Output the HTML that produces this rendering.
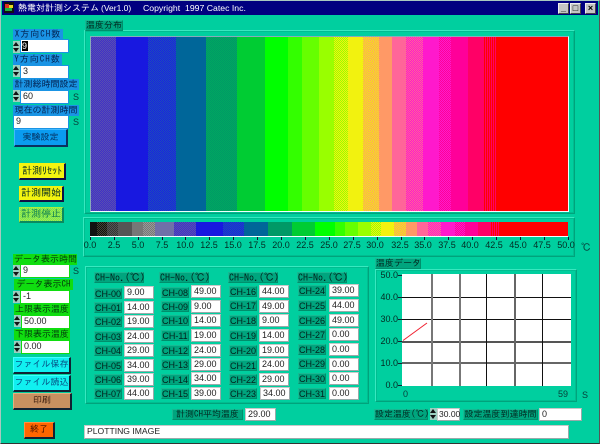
<!DOCTYPE html>
<html><head><meta charset="utf-8"><style>
html,body{margin:0;padding:0;background:#00cf9f;width:600px;height:444px;overflow:hidden}
div,span{position:absolute;box-sizing:border-box;white-space:nowrap}
#w{left:0;top:0;width:600px;height:444px;background:#00cf9f;font:9px/10px "IPAGothic","Liberation Sans","Noto Sans CJK JP",sans-serif;color:#022a22;border:1px solid #a8c8c0;border-right-color:#555;border-bottom-color:#333;overflow:hidden}
#r{left:-1px;top:-1px;width:600px;height:444px}
.l{height:11px;line-height:10px;text-align:center;background:#00a57e;border:1px solid #18b892;border-right-color:#008f6c;border-bottom-color:#008f6c;color:#022a22}
.b{background:#1a94e4;border-color:#1a94e4;color:#03204e}
.g{background:#10dd10;border-color:#10dd10;color:#033a0c}
.i{background:#fff;color:#222;padding-left:2px;line-height:11px;height:13px;border:1px solid #c8c8c8;border-right-color:#9aa;border-bottom-color:#9aa;font-family:"Liberation Sans",sans-serif;font-size:9px}
.ib{border:1px solid #1a94e4;height:14px}
.ig{border:1px solid #10dd10;height:14px}
.s{width:7px;height:12px;background:#9ccfc0}
.s:before{content:"";position:absolute;left:0;top:1px;border:3px solid transparent;border-top:0;border-bottom:4px solid #111;width:0;height:0}
.s:after{content:"";position:absolute;left:0;top:7px;border:3px solid transparent;border-bottom:0;border-top:4px solid #111;width:0;height:0}
.u{font-family:"Liberation Sans",sans-serif;font-size:9px;color:#06403a}
.btn{text-align:center;border:1px solid #ddd;border-right-color:#222;border-bottom-color:#222;border-right-width:2px;border-bottom-width:2px;font-size:9px}
.f{border:1px solid #38e8c0;border-right-color:#00a37c;border-bottom-color:#00a37c;outline:1px solid #00bd90;outline-offset:-2px}
.c{top:0;height:100%}
.n{font-family:"Liberation Sans",sans-serif;font-size:9px;line-height:10px;top:240px;width:30px;text-align:center;color:#032a22}
.t{top:237px;width:1px;height:3px;background:#113}
.h{left:402px;width:169px;height:1px;background:#111}
.v{top:274px;width:1px;height:112px;background:#111}
.y{left:373px;width:25px;text-align:right;font-family:"Liberation Sans",sans-serif;font-size:9px;color:#032a22}
.k{left:398px;width:4px;height:1px;background:#123}
.cl{width:28px;height:11px;text-align:center;background:#00a57e;border:1px solid #18b892;border-right-color:#008f6c;border-bottom-color:#008f6c;font:9px/10px "Liberation Sans",sans-serif;color:#02221c}
.cv{width:30px;height:13px;background:#fff;border:1px solid #c8c8c8;border-right-color:#9aa;border-bottom-color:#9aa;padding-left:2px;font:9px/11px "Liberation Sans",sans-serif;color:#222}
.hd{width:50px;height:11px;text-align:center;background:#00a57e;border:1px solid #18b892;border-right-color:#008f6c;border-bottom-color:#008f6c;font:10px/10px "IPAGothic","Liberation Sans",sans-serif;color:#02221c}
.tb{top:3px;width:11px;height:11px;background:#c4c4c4;border:1px solid #eee;border-right-color:#444;border-bottom-color:#444;color:#000;font:bold 9px/9px "Liberation Sans",sans-serif;text-align:center}
.d1{background:conic-gradient(#4030c8 25%,#5850b0 0 50%,#4030c8 0 75%,#5850b0 0) 0 0/2px 2px}
.d2{background:conic-gradient(#1a20e0 25%,#1c50b8 0 50%,#1a20e0 0 75%,#1c50b8 0) 0 0/2px 2px}
.d3{background:conic-gradient(#009966 25%,#00a860 0 50%,#009966 0 75%,#00a860 0) 0 0/2px 2px}
.d4{background:conic-gradient(#99ff00 25%,#f2f20f 0 50%,#99ff00 0 75%,#f2f20f 0) 0 0/2px 2px}
.d5{background:conic-gradient(#f2f20f 25%,#ff9966 0 50%,#f2f20f 0 75%,#ff9966 0) 0 0/2px 2px}
.d6{background:conic-gradient(#ff6699 25%,#ff19cc 0 50%,#ff6699 0 75%,#ff19cc 0) 0 0/2px 2px}
.d7{background:conic-gradient(#ff19cc 25%,#ff0099 0 50%,#ff19cc 0 75%,#ff0099 0) 0 0/2px 2px}
.d8{background:repeating-linear-gradient(90deg,#ff0066 0 1px,#ff0000 1px 2px)}
.d9{background:conic-gradient(#111 25%,#443 0 50%,#111 0 75%,#443 0) 0 0/2px 2px}
.d10{background:conic-gradient(#333 25%,#555 0 50%,#333 0 75%,#555 0) 0 0/2px 2px}
.d11{background:conic-gradient(#777 25%,#999 0 50%,#777 0 75%,#999 0) 0 0/2px 2px}
</style></head><body>
<div id="w"><div id="r">

<div style="left:2px;top:1px;width:596px;height:14px;background:#000080"></div>
<div style="left:4px;top:2px;width:10px;height:11px;background:#111"></div>
<div style="left:5px;top:4px;width:4px;height:4px;background:#e03020"></div>
<div style="left:9px;top:5px;width:4px;height:3px;background:#e8d820"></div>
<div style="left:5px;top:8px;width:7px;height:3px;background:#20b040"></div>
<div style="left:18px;top:3px;height:11px;line-height:11px;color:#fff;font-size:9px">熱電対計測システム</div>
<div style="left:101px;top:3px;height:11px;color:#fff;font:8.5px/11px 'Liberation Sans',sans-serif">(Ver1.0)</div>
<div style="left:143px;top:3px;height:11px;color:#fff;font:8.7px/11px 'Liberation Sans',sans-serif">Copyright&nbsp;&nbsp;1997 Catec Inc.</div>
<div class="tb" style="left:558px">_</div>
<div class="tb" style="left:570px">□</div>
<div class="tb" style="left:585px">×</div>

<div class="f" style="left:84px;top:30px;width:491px;height:184px"></div>
<div class="l" style="left:85px;top:20px;width:38px;height:11px">温度分布</div>
<div style="left:90px;top:36px;width:479px;height:176px;border:1px solid #8ab;border-right-color:#eff;border-bottom-color:#eff"></div>
<div style="left:91px;top:37px;width:477px;height:174px;background:#f00;overflow:hidden">
<div class="c d1" style="left:0;width:25px"></div>
<div class="c" style="left:25px;width:32px;background:#1818e0"></div>
<div class="c d2" style="left:57px;width:28px"></div>
<div class="c" style="left:85px;width:30px;background:#006699"></div>
<div class="c d3" style="left:115px;width:31px"></div>
<div class="c" style="left:146px;width:28px;background:#00cc33"></div>
<div class="c" style="left:174px;width:23px;background:#0f0"></div>
<div class="c" style="left:197px;width:14px;background:#3f0"></div>
<div class="c" style="left:211px;width:17px;background:#6f0"></div>
<div class="c" style="left:228px;width:15px;background:#9f0"></div>
<div class="c d4" style="left:243px;width:14px"></div>
<div class="c" style="left:257px;width:15px;background:#f2f20f"></div>
<div class="c d5" style="left:272px;width:16px"></div>
<div class="c" style="left:288px;width:13px;background:#f96"></div>
<div class="c" style="left:301px;width:14px;background:#f69"></div>
<div class="c d6" style="left:315px;width:17px"></div>
<div class="c" style="left:332px;width:16px;background:#ff19cc"></div>
<div class="c d7" style="left:348px;width:12px"></div>
<div class="c" style="left:360px;width:17px;background:#f09"></div>
<div class="c" style="left:377px;width:15px;background:#f06"></div>
<div class="c d8" style="left:392px;width:14px"></div>
</div>

<div class="f" style="left:83px;top:217px;width:492px;height:40px"></div>
<div style="left:90px;top:222px;width:478px;height:15px;background:#f00;border-bottom:1px solid #eff;overflow:hidden">
<div class="c" style="left:0;width:7px;background:#111"></div>
<div class="c d9" style="left:7px;width:10px"></div>
<div class="c d10" style="left:17px;width:11px"></div>
<div class="c" style="left:28px;width:14px;background:#555"></div>
<div class="c" style="left:42px;width:11px;background:#777"></div>
<div class="c d11" style="left:53px;width:12px"></div>
<div class="c" style="left:65px;width:19px;background:#7070a8"></div>
<div class="c d1" style="left:84px;width:22px"></div>
<div class="c" style="left:106px;width:27px;background:#1818e0"></div>
<div class="c d2" style="left:133px;width:21px"></div>
<div class="c" style="left:154px;width:24px;background:#006699"></div>
<div class="c" style="left:178px;width:24px;background:#009966"></div>
<div class="c" style="left:202px;width:23px;background:#0c3"></div>
<div class="c" style="left:225px;width:20px;background:#0f0"></div>
<div class="c" style="left:245px;width:10px;background:#3f0"></div>
<div class="c" style="left:255px;width:13px;background:#6f0"></div>
<div class="c" style="left:268px;width:13px;background:#9f0"></div>
<div class="c d4" style="left:281px;width:10px"></div>
<div class="c" style="left:291px;width:13px;background:#f2f20f"></div>
<div class="c d5" style="left:304px;width:12px"></div>
<div class="c" style="left:316px;width:11px;background:#f96"></div>
<div class="c" style="left:327px;width:11px;background:#f69"></div>
<div class="c d6" style="left:338px;width:13px"></div>
<div class="c" style="left:351px;width:14px;background:#ff19cc"></div>
<div class="c d7" style="left:365px;width:10px"></div>
<div class="c" style="left:375px;width:13px;background:#f09"></div>
<div class="c" style="left:388px;width:12px;background:#f06"></div>
<div class="c d8" style="left:400px;width:10px"></div>
</div>
<div class="t" style="left:90px"></div><div class="t" style="left:114px"></div><div class="t" style="left:138px"></div><div class="t" style="left:162px"></div><div class="t" style="left:185px"></div><div class="t" style="left:209px"></div><div class="t" style="left:233px"></div><div class="t" style="left:257px"></div><div class="t" style="left:281px"></div><div class="t" style="left:305px"></div><div class="t" style="left:329px"></div><div class="t" style="left:353px"></div><div class="t" style="left:377px"></div><div class="t" style="left:401px"></div><div class="t" style="left:424px"></div><div class="t" style="left:448px"></div><div class="t" style="left:472px"></div><div class="t" style="left:496px"></div><div class="t" style="left:520px"></div><div class="t" style="left:544px"></div><div class="t" style="left:568px"></div>
<div class="n" style="left:75px">0.0</div><div class="n" style="left:99px">2.5</div><div class="n" style="left:123px">5.0</div><div class="n" style="left:147px">7.5</div><div class="n" style="left:170px">10.0</div><div class="n" style="left:194px">12.5</div><div class="n" style="left:218px">15.0</div><div class="n" style="left:242px">17.5</div><div class="n" style="left:266px">20.0</div><div class="n" style="left:290px">22.5</div><div class="n" style="left:314px">25.0</div><div class="n" style="left:337px">27.5</div><div class="n" style="left:360px">30.0</div><div class="n" style="left:385px">32.5</div><div class="n" style="left:408px">35.0</div><div class="n" style="left:432px">37.5</div><div class="n" style="left:455px">40.0</div><div class="n" style="left:479px">42.5</div><div class="n" style="left:503px">45.0</div><div class="n" style="left:527px">47.5</div><div class="n" style="left:551px">50.0</div>
<div class="u" style="left:581px;top:243px;font:10px/10px 'IPAGothic',sans-serif">℃</div>

<div class="l b" style="left:13px;top:29px;width:50px;letter-spacing:1px">X方向CH数</div>
<div class="s" style="left:13px;top:41px"></div>
<div class="i ib" style="left:20px;top:39px;width:49px"><span style="left:1px;top:1px;width:6px;height:10px;background:#000;color:#fff;line-height:10px">9</span></div>
<div class="l b" style="left:13px;top:54px;width:49px;letter-spacing:1px">Y方向CH数</div>
<div class="s" style="left:13px;top:65px"></div>
<div class="i ib" style="left:20px;top:65px;width:49px">3</div>
<div class="l b" style="left:13px;top:79px;width:66px">計測総時間設定</div>
<div class="s" style="left:13px;top:90px"></div>
<div class="i ib" style="left:20px;top:90px;width:49px">60</div>
<div class="u" style="left:73px;top:92px">S</div>
<div class="l b" style="left:13px;top:105px;width:66px">現在の計測時間</div>
<div class="i ib" style="left:13px;top:115px;width:56px">9</div>
<div class="u" style="left:73px;top:117px">S</div>
<div class="btn" style="left:14px;top:129px;width:54px;height:18px;line-height:15px;background:#0a9cf0;color:#053060;border-color:#40b8ff #0a3060 #0a3060 #40b8ff">実験設定</div>

<div class="btn" style="left:19px;top:163px;width:47px;height:17px;line-height:14px;background:#f4f410;font-size:10px;border-color:#f4f410 #114 #114 #f4f410">計測ﾘｾｯﾄ</div>
<div class="btn" style="left:19px;top:186px;width:45px;height:16px;line-height:13px;background:#f4f410;font-size:10px;border-color:#f4f410 #114 #114 #f4f410">計測開始</div>
<div class="btn" style="left:19px;top:207px;width:45px;height:16px;line-height:13px;background:conic-gradient(#a8f040 25%,#70e060 0 50%,#a8f040 0 75%,#70e060 0) 0 0/2px 2px;font-size:10px;color:#108050;border-color:#a8f040 #0a8a60 #0a8a60 #a8f040">計測停止</div>

<div class="l g" style="left:13px;top:254px;width:64px">データ表示時間</div>
<div class="s" style="left:13px;top:265px"></div>
<div class="i ig" style="left:20px;top:264px;width:50px">9</div>
<div class="u" style="left:73px;top:266px">S</div>
<div class="l g" style="left:14px;top:279px;width:59px">データ表示CH</div>
<div class="s" style="left:13px;top:291px"></div>
<div class="i ig" style="left:20px;top:290px;width:50px">-1</div>
<div class="l g" style="left:14px;top:304px;width:56px">上限表示温度</div>
<div class="s" style="left:14px;top:315px"></div>
<div class="i ig" style="left:21px;top:315px;width:49px">50.00</div>
<div class="l g" style="left:14px;top:329px;width:56px">下限表示温度</div>
<div class="s" style="left:14px;top:341px"></div>
<div class="i ig" style="left:21px;top:340px;width:49px">0.00</div>

<div class="btn" style="left:13px;top:357px;width:58px;height:17px;line-height:14px;background:#10f0f0;color:#064a80;border-color:#40ffff #123 #123 #40ffff">ファイル保存</div>
<div class="btn" style="left:13px;top:375px;width:58px;height:17px;line-height:14px;background:#10f0f0;color:#064a80;border-color:#40ffff #123 #123 #40ffff">ファイル読込</div>
<div class="btn" style="left:13px;top:393px;width:59px;height:17px;line-height:14px;background:#c89060;color:#402010;border-color:#e0b080 #123 #123 #e0b080">印刷</div>
<div class="btn" style="left:24px;top:422px;width:31px;height:17px;line-height:14px;background:#ff6600;color:#401000;border-color:#ff9040 #123 #123 #ff9040">終了</div>

<div class="f" style="left:85px;top:266px;width:284px;height:138px"></div>

<div class="hd" style="left:94px;top:272px">CH-No.(℃)</div>
<div class="hd" style="left:159px;top:272px">CH-No.(℃)</div>
<div class="hd" style="left:228px;top:272px">CH-No.(℃)</div>
<div class="hd" style="left:297px;top:272px">CH-No.(℃)</div>

<div class="cl" style="left:94px;top:288px">CH-00</div><div class="cv" style="left:124px;top:286px">9.00</div>
<div class="cl" style="left:94px;top:302px">CH-01</div><div class="cv" style="left:124px;top:301px">14.00</div>
<div class="cl" style="left:94px;top:316px">CH-02</div><div class="cv" style="left:124px;top:315px">19.00</div>
<div class="cl" style="left:94px;top:331px">CH-03</div><div class="cv" style="left:124px;top:330px">24.00</div>
<div class="cl" style="left:94px;top:345px">CH-04</div><div class="cv" style="left:124px;top:344px">29.00</div>
<div class="cl" style="left:94px;top:360px">CH-05</div><div class="cv" style="left:124px;top:359px">34.00</div>
<div class="cl" style="left:94px;top:374px">CH-06</div><div class="cv" style="left:124px;top:373px">39.00</div>
<div class="cl" style="left:94px;top:388px">CH-07</div><div class="cv" style="left:124px;top:387px">44.00</div>

<div class="cl" style="left:161px;top:287px">CH-08</div><div class="cv" style="left:191px;top:285px">49.00</div>
<div class="cl" style="left:161px;top:301px">CH-09</div><div class="cv" style="left:191px;top:300px">9.00</div>
<div class="cl" style="left:161px;top:315px">CH-10</div><div class="cv" style="left:191px;top:314px">14.00</div>
<div class="cl" style="left:161px;top:330px">CH-11</div><div class="cv" style="left:191px;top:329px">19.00</div>
<div class="cl" style="left:161px;top:345px">CH-12</div><div class="cv" style="left:191px;top:344px">24.00</div>
<div class="cl" style="left:161px;top:359px">CH-13</div><div class="cv" style="left:191px;top:358px">29.00</div>
<div class="cl" style="left:161px;top:374px">CH-14</div><div class="cv" style="left:191px;top:372px">34.00</div>
<div class="cl" style="left:161px;top:388px">CH-15</div><div class="cv" style="left:191px;top:387px">39.00</div>

<div class="cl" style="left:229px;top:286px">CH-16</div><div class="cv" style="left:259px;top:285px">44.00</div>
<div class="cl" style="left:229px;top:300px">CH-17</div><div class="cv" style="left:259px;top:300px">49.00</div>
<div class="cl" style="left:229px;top:315px">CH-18</div><div class="cv" style="left:259px;top:314px">9.00</div>
<div class="cl" style="left:229px;top:330px">CH-19</div><div class="cv" style="left:259px;top:329px">14.00</div>
<div class="cl" style="left:229px;top:345px">CH-20</div><div class="cv" style="left:259px;top:344px">19.00</div>
<div class="cl" style="left:229px;top:360px">CH-21</div><div class="cv" style="left:259px;top:358px">24.00</div>
<div class="cl" style="left:229px;top:374px">CH-22</div><div class="cv" style="left:259px;top:373px">29.00</div>
<div class="cl" style="left:229px;top:388px">CH-23</div><div class="cv" style="left:260px;top:387px">34.00</div>

<div class="cl" style="left:298px;top:285px">CH-24</div><div class="cv" style="left:329px;top:284px">39.00</div>
<div class="cl" style="left:298px;top:300px">CH-25</div><div class="cv" style="left:329px;top:299px">44.00</div>
<div class="cl" style="left:298px;top:315px">CH-26</div><div class="cv" style="left:329px;top:314px">49.00</div>
<div class="cl" style="left:298px;top:329px">CH-27</div><div class="cv" style="left:329px;top:328px">0.00</div>
<div class="cl" style="left:298px;top:344px">CH-28</div><div class="cv" style="left:329px;top:343px">0.00</div>
<div class="cl" style="left:298px;top:358px">CH-29</div><div class="cv" style="left:329px;top:358px">0.00</div>
<div class="cl" style="left:298px;top:373px">CH-30</div><div class="cv" style="left:329px;top:372px">0.00</div>
<div class="cl" style="left:298px;top:388px">CH-31</div><div class="cv" style="left:329px;top:387px">0.00</div>

<div class="l" style="left:375px;top:258px;width:46px">温度データ</div>
<div class="f" style="left:375px;top:269px;width:202px;height:133px"></div>
<div style="left:402px;top:274px;width:169px;height:112px;background:#fff"></div>
<div class="h" style="top:297px"></div><div class="h" style="top:319px"></div><div class="h" style="top:341px;background:#555;height:2px"></div><div class="h" style="top:362px;background:#666;height:2px"></div>
<div class="v" style="left:431px;width:2px;background:#777"></div><div class="v" style="left:459px;width:2px;background:#777"></div><div class="v" style="left:486px"></div><div class="v" style="left:514px;width:2px;background:#666"></div><div class="v" style="left:542px"></div>
<svg style="position:absolute;left:0;top:0" width="600" height="444"><path d="M403 340.5L427 323" stroke="#f02030" stroke-width="1" fill="none"/></svg>
<div class="y" style="top:270px">50.0</div><div class="y" style="top:292px">40.0</div><div class="y" style="top:314px">30.0</div><div class="y" style="top:336px">20.0</div><div class="y" style="top:358px">10.0</div><div class="y" style="top:380px">0.0</div>
<div class="k" style="top:275px"></div><div class="k" style="top:297px"></div><div class="k" style="top:319px"></div><div class="k" style="top:341px"></div><div class="k" style="top:363px"></div><div class="k" style="top:385px"></div>
<div class="u" style="left:403px;top:389px">0</div><div class="u" style="left:558px;top:389px">59</div><div class="u" style="left:582px;top:390px">S</div>

<div class="l" style="left:172px;top:409px;width:71px">計測CH平均温度</div>
<div class="i" style="left:245px;top:408px;width:31px">29.00</div>
<div class="l" style="left:374px;top:409px;width:54px">設定温度(℃)</div>
<div class="s" style="left:430px;top:408px"></div>
<div class="i" style="left:437px;top:408px;width:23px;padding-left:1px;font-size:8.5px">30.00</div>
<div class="l" style="left:463px;top:409px;width:75px">設定温度到達時間</div>
<div class="i" style="left:539px;top:408px;width:43px">0</div>
<div class="i" style="left:84px;top:425px;width:485px;height:14px;font-size:8.6px">PLOTTING IMAGE</div>

</div></div>
</body></html>
